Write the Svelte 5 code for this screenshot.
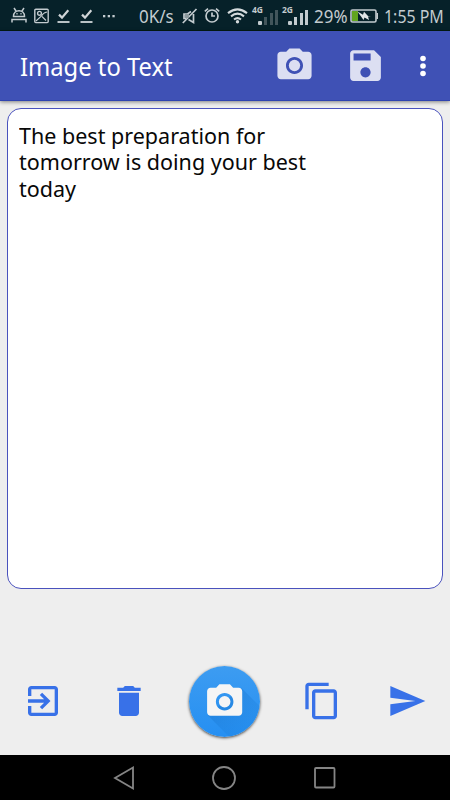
<script>
  const camera =
    'M9 2 7.17 4H4c-1.1 0-2 .9-2 2v12c0 1.1.9 2 2 2h16c1.1 0 2-.9 2-2V6c0-1.1-.9-2-2-2h-3.17L15 2H9zm3 15c-2.76 0-5-2.24-5-5s2.24-5 5-5 5 2.24 5 5-2.24 5-5 5z';
  const actions = [
    { name: 'Exit', d: 'M10.09 15.59 11.5 17l5-5-5-5-1.41 1.41L12.67 11H3v2h9.67l-2.58 2.59zM19 3H5c-1.11 0-2 .9-2 2v4h2V5h14v14H5v-4H3v4c0 1.1.89 2 2 2h14c1.1 0 2-.9 2-2V5c0-1.1-.9-2-2-2z' },
    { name: 'Delete', d: 'M6 19c0 1.1.9 2 2 2h8c1.1 0 2-.9 2-2V7H6v12zM19 4h-3.5l-1-1h-5l-1 1H5v2h14V4z' },
    { name: 'Camera', fab: true },
    { name: 'Copy', d: 'M16 1H4c-1.1 0-2 .9-2 2v14h2V3h12V1zm3 4H8c-1.1 0-2 .9-2 2v14c0 1.1.9 2 2 2h11c1.1 0 2-.9 2-2V7c0-1.1-.9-2-2-2zm0 16H8V7h11v14z' },
    { name: 'Send', d: 'M2.01 21 23 12 2.01 3 2 10l15 2-15 2z' }
  ];
</script>

<main>
  <div class="status">
    <svg class="android" width="16" height="18" viewBox="0 0 16 18" fill="none" stroke="#c3cbcf" stroke-width="1.5">
      <path d="M2.5 9.5C2.5 1.8 13.5 1.8 13.5 9.5ZM3 1l2 3M13 1l-2 3M1 15.5v-3h14v3" />
      <path d="M5.4 6.8h1.2M9.4 6.8h1.2" />
    </svg>
    <svg class="picture" width="15" height="18" viewBox="0 0 15 18" fill="none" stroke="#c3cbcf" stroke-width="1.4">
      <rect x=".8" y="2.2" width="13.4" height="13.4" rx="1" />
      <circle cx="5.5" cy="6.3" r="1.9" /><path d="M2 14l5.5-5c1-2 3-3.5 5.5-4M8 9.5l4 4" stroke-width="1.1" />
    </svg>
    {#each [0, 1] as n (n)}
      <svg class="done" width="13" height="18" viewBox="0 0 13 18" fill="none" stroke="#d0d5d7">
        <path d="M2 7.6l3 3L11.3 3.2" stroke-width="2.2" /><path d="M.5 15h12" stroke-width="1.8" />
      </svg>
    {/each}
    <svg class="more" width="12" height="18" viewBox="0 0 12 18" fill="#c3cbcf">
      <rect y="8" width="2.3" height="2.3" /><rect x="4.7" y="8" width="2.3" height="2.3" /><rect x="9.4" y="8" width="2.3" height="2.3" />
    </svg>
    <span class="speed">0K/s</span>
    <svg class="mute" width="16" height="18" viewBox="0 0 16 18" fill="none" stroke="#c3cbcf" stroke-width="1.7">
      <path d="M9 4.5 5.5 7H2v4.5h2M11.5 7v8.5L6.500 12.500M.8 16 14.5 2" /><path d="M3 7h4v4H3z" fill="#8b989d" stroke="none" />
    </svg>
    <svg class="alarm" width="16" height="18" viewBox="0 0 16 18" fill="none" stroke="#c3cbcf" stroke-width="1.7">
      <circle cx="8" cy="9" r="6" /><path d="M8 5.5V9h3M.8 4.3 4 1.6M15.2 4.3 12 1.6" />
    </svg>
    <svg class="wifi" width="21" height="18" viewBox="0 0 21 18" fill="none" stroke="#d4dadc" stroke-width="2.1">
      <path d="M1 6.1Q10.5-1.5 20 6.1M4 9.4Q10.5 4 17 9.4M7 12.5Q10.5 9.8 14 12.5" /><circle cx="10.5" cy="14.7" r="1.7" fill="#d4dadc" stroke="none" />
    </svg>
    <div class="signal first">
      <small>4G</small>
      <i class="on" style:height="4px"></i><i style:height="8px"></i><i style:height="11.5px"></i><i style:height="15px"></i>
    </div>
    <div class="signal">
      <small>2G</small>
      <i class="on" style:height="4px"></i><i class="on" style:height="8px"></i><i class="on" style:height="11.5px"></i><i class="on" style:height="15px"></i>
    </div>
    <span class="percent">29%</span>
    <svg class="battery" width="29" height="16" viewBox="0 0 29 16">
      <rect x="1" y="2" width="25" height="12" rx="1.5" fill="#062129" stroke="#c3cbcf" stroke-width="1.6" />
      <path d="M26.5 5h1.5v6h-1.5z" fill="#c3cbcf" /><path d="M2 3h6v10H2z" fill="#62a51f" />
      <path d="M7.5 3.5 13 6.8l1-3 4 4.200h3l-3 .5 1 3.500-4.500-2.500-1 2.500z" fill="#e1e5e6" />
    </svg>
    <span class="clock">1:55 PM</span>
  </div>

  <header>
    <h1>Image to Text</h1>
    <svg class="cam" viewBox="0 0 24 24"><path d={camera} /><circle cx="12" cy="12" r="3.3" /></svg>
    <svg class="save" viewBox="0 0 24 24"><path d="M17 3H5c-1.11 0-2 .9-2 2v14c0 1.1.89 2 2 2h14c1.1 0 2-.9 2-2V7l-4-4zm-5 16c-1.66 0-3-1.34-3-3s1.34-3 3-3 3 1.34 3 3-1.34 3-3 3zm3-10H5V5h10v4z" /></svg>
    <svg class="menu" width="8" height="26" viewBox="0 0 8 26"><circle cx="4" cy="5.5" r="2.8" /><circle cx="4" cy="13" r="2.8" /><circle cx="4" cy="20.5" r="2.8" /></svg>
  </header>

  <section>
    <p>The best preparation for<br />tomorrow is doing your best<br />today</p>
  </section>

  <div class="actions">
    {#each actions as action (action.name)}
      {#if action.fab}
        <button class="fab" aria-label={action.name}>
          <svg viewBox="0 0 72 72">
            <defs><linearGradient id="shade" x1="0" y1="0" x2="1" y2="1"><stop offset=".35" stop-color="#1976cf" stop-opacity=".4" /><stop offset="1" stop-color="#1b82df" stop-opacity=".08" /></linearGradient></defs>
            <path d="M19 50 53 22 72 41V72H41z" fill="url(#shade)" />
            <g transform="translate(14.8 14.9) scale(1.78)" fill="#f5f5f5"><path d={camera} /><circle cx="12" cy="12" r="3.3" /></g>
          </svg>
        </button>
      {:else}
        <button aria-label={action.name}><svg viewBox="0 0 24 24"><path d={action.d} /></svg></button>
      {/if}
    {/each}
  </div>

  <nav>
    <svg width="22" height="26" viewBox="0 0 22 26"><path d="M20 2.5v21L2 13z" /></svg>
    <svg width="26" height="26" viewBox="0 0 26 26"><circle cx="13" cy="13" r="11" /></svg>
    <svg width="24" height="26" viewBox="0 0 24 26"><rect x="2" y="3" width="19.5" height="19.5" rx="1" /></svg>
  </nav>
</main>

<style>
  :global(body) { margin: 0; overflow: hidden; }
  main { width: 450px; height: 800px; display: flex; flex-direction: column; background: #eee; font-family: 'Noto Sans', 'Open Sans', sans-serif; }
  svg { display: block; flex: none; }
  .status { height: 31px; box-sizing: border-box; display: flex; align-items: center; padding-top: 2px; background: #062129; border-bottom: 1px solid #031b12; color: #c3cbcf; white-space: nowrap; }
  .status span { flex: none; line-height: 28px; transform-origin: left; }
  .android { margin-left: 11px; }
  .picture { margin-left: 7px; }
  .done { margin-left: 8px; }
  .done + .done { margin-left: 10px; }
  .more { margin-left: 10px; }
  .speed { width: 35px; margin-left: 23.5px; font-size: 17.5px; transform: scaleX(.97); }
  .mute { margin-left: 8px; }
  .alarm { margin-left: 6.5px; }
  .wifi { margin-left: 7px; }
  .signal { position: relative; width: 20px; height: 19px; box-sizing: border-box; display: flex; flex: none; justify-content: space-between; align-items: flex-end; margin-left: 10px; padding-bottom: 1px; }
  .signal small { position: absolute; left: -6px; top: -2px; font: bold 8.5px/9px 'Noto Sans', sans-serif; }
  .signal i { width: 3px; background: #42555b; }
  .signal i.on { background: #c3cbcf; }
  .signal i:nth-of-type(1) { width: 4px; border-radius: 1px; }
  .percent { width: 34px; margin-left: 6px; font-size: 17.5px; transform: scaleX(.97); }
  .battery { margin-left: 2px; }
  .clock { margin-left: 5px; font-size: 17.5px; transform: scaleX(.91); }
  header { position: relative; height: 70px; flex: none; display: flex; align-items: center; background: #3f51b5; box-shadow: 0 1px 4px #0007; box-sizing: border-box; border-bottom: 1px solid #2f43b0; }
  h1 { width: 254px; margin: 3px 0 0 20px; color: #fff; font-size: 24.5px; line-height: 34px; font-weight: 400; white-space: nowrap; transform: scaleX(.97); transform-origin: left; }
  header svg { fill: #dcdff2; }
  .cam, .save { width: 41px; height: 41px; }
  .save { margin-left: 29.5px; }
  header .menu { margin-left: 33px; margin-top: 1px; fill: #fff; }
  section { height: 481px; flex: none; box-sizing: border-box; margin: 7px 7px 0; padding: 13px 11px; border: 1px solid #4a52bd; border-radius: 14px; background: #fff; }
  p { margin: 0; color: #080808; font-size: 22px; line-height: 26.3px; white-space: nowrap; transform: scaleX(.978); transform-origin: left; }
  .actions { flex: 1; display: flex; align-items: flex-end; padding: 0 23px 34px; }
  button { flex: none; width: 40px; height: 40px; padding: 0; border: 0; background: none; }
  button + button { margin-left: 45.5px; }
  button svg { width: 100%; height: 100%; fill: #3871e8; }
  button.fab { width: 71px; height: 71px; border-radius: 50%; overflow: hidden; margin: 0 -4px -16px 40.5px; background: linear-gradient(#3d9cf1, #258ff2); box-shadow: 0 1px 3px #000b; }
  nav { height: 45px; flex: none; display: flex; align-items: center; justify-content: space-between; background: #000; padding: 0 113px; }
  nav svg { fill: none; stroke: #858585; stroke-width: 1.8; }
</style>
